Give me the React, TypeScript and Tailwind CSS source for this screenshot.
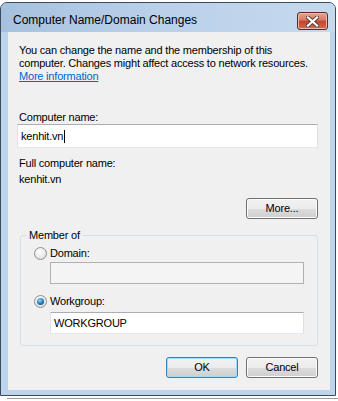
import React from "react"

const font = { fontFamily: '"Liberation Sans", Arial, sans-serif' }

const Btn = ({ label, primary = false }: { label: string; primary?: boolean }) => (
    <div
        className={`flex h-[21px] w-[72px] items-center justify-center rounded-[3px] border bg-[linear-gradient(#f2f2f2_0%,#ebebeb_50%,#dddddd_50%,#cfcfcf_100%)] text-[11px] text-black ${
            primary
                ? "border-[#3c7fb1] shadow-[inset_0_0_0_1px_#9fdcf6]"
                : "border-[#707070] shadow-[inset_0_0_0_1px_#fcfcfc]"
        }`}
    >
        {label}
    </div>
)

const Radio = ({ checked, label }: { checked?: boolean; label: string }) => (
    <div className="flex h-[14px] items-center gap-[3px] text-[11px] text-black">
        <div className="flex h-[13px] w-[13px] items-center justify-center rounded-full border border-[#8e8f8f] bg-[radial-gradient(circle_at_40%_35%,#ffffff,#d7d7d7)]">
            {checked && (
                <div className="h-[7px] w-[7px] rounded-full bg-[radial-gradient(circle_at_40%_35%,#8fd9ff,#1b6fa8_60%,#0d3f6b)]" />
            )}
        </div>
        <span>{label}</span>
    </div>
)

export default function App() {
    return (
        <div className="relative h-[401px] w-[338px] bg-white" style={font}>
            <div className="mt-[2px] flex h-[394px] w-[336px] flex-col rounded-t-[7px] border border-[#3d4a5a] bg-[#bcd4ec]">
                {/* title bar */}
                <div className="flex h-[29px] shrink-0 items-start justify-between rounded-t-[6px] bg-[linear-gradient(100deg,#a6c1de_0%,#b9d0e9_45%,#c6daee_100%)] pl-[12px] pr-[7px]">
                    <span className="mt-[10px] text-[12px] leading-[14px] text-black">Computer Name/Domain Changes</span>
                    <div className="mt-[9px] flex h-[18px] w-[31px] items-center justify-center rounded-[3px] border border-[#5a2a24] bg-[linear-gradient(#e8a493_0%,#d47b64_45%,#c2442b_50%,#d46a4c_100%)] shadow-[inset_0_0_0_1px_#f0b8aa]">
                        <svg width="13" height="11" viewBox="0 0 13 11">
                            <path d="M2 1.5 L11 9.5 M11 1.5 L2 9.5" stroke="#5b3a36" strokeWidth="4" strokeLinecap="square" />
                            <path d="M2 1.5 L11 9.5 M11 1.5 L2 9.5" stroke="#ffffff" strokeWidth="2.2" strokeLinecap="square" />
                        </svg>
                    </div>
                </div>

                {/* client area */}
                <div className="ml-[7px] mr-[5px] h-[358px] shrink-0 bg-[#f0f0f0] px-[11px] pt-[12px] text-[11px] leading-[13px] tracking-[-0.2px] text-black">
                    <p className="whitespace-nowrap">
                        You can change the name and the membership of this
                        <br />
                        computer. Changes might affect access to network resources.
                        <br />
                        <span className="text-[#0066cc] underline">More information</span>
                    </p>

                    <div className="mt-[28px]">Computer name:</div>
                    <div className="ml-[-2px] flex h-[24px] w-[301px] items-center border border-[#abadb3] border-b-[#e3e9ef] border-l-[#e2e3ea] border-r-[#dbdfe6] bg-white px-[3px]">
                        kenhit.vn
                        <span className="ml-px h-[13px] w-px bg-black" />
                    </div>

                    <div className="mt-[9px]">Full computer name:</div>
                    <div className="mt-[3px]">kenhit.vn</div>

                    <div className="mt-[12px] flex justify-end pr-[1px]">
                        <Btn label="More..." />
                    </div>

                    {/* group box */}
                    <div className="relative ml-[1px] mt-[16px] h-[111px] w-[298px] rounded-[3px] border border-[#d5dfe5] px-[13px] pt-[10px]">
                        <span className="absolute left-[5px] top-[-7px] bg-[#f0f0f0] px-[3px]">Member of</span>
                        <Radio label="Domain:" />
                        <div className="ml-[16px] mt-[2px] h-[22px] w-[254px] border border-[#adb2b5] bg-[#f4f4f4]" />
                        <div className="mt-[10px]">
                            <Radio checked label="Workgroup:" />
                        </div>
                        <div className="ml-[16px] mt-[4px] flex h-[22px] w-[254px] items-center border border-[#abadb3] border-b-[#e3e9ef] border-l-[#e2e3ea] border-r-[#dbdfe6] bg-white px-[3px]">
                            WORKGROUP
                        </div>
                    </div>

                    <div className="mt-[11px] flex justify-end gap-[8px] pr-[1px]">
                        <Btn label="OK" primary />
                        <Btn label="Cancel" />
                    </div>
                </div>
            </div>
            <div className="ml-[7px] mt-[2px] h-px w-[331px] bg-[#9a9a9a]" />
        </div>
    )
}
